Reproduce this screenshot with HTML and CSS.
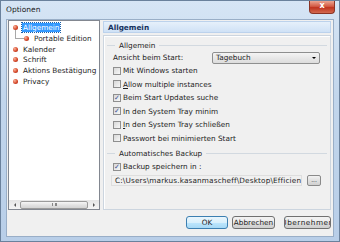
FILE: index.html
```html
<!DOCTYPE html>
<html lang="de">
<head>
    <meta charset="UTF-8">
    <title>Optionen</title>
    <link rel="stylesheet" href="styles.css">
</head>
<body>

    <div class="window">
        <div class="titlebar">
            <span class="title">Optionen</span>
            <span class="close">x</span>
        </div>

        <div class="client">
            <div class="main">

                <!-- tree of option pages -->
                <div class="tree">
                    <ul class="nodes">
                        <li class="node"><span class="ball"></span><span class="label selected">Allgemein</span></li>
                        <li class="node child"><span class="branch"></span><span class="ball"></span><span class="label">Portable Edition</span></li>
                        <li class="node"><span class="ball"></span><span class="label">Kalender</span></li>
                        <li class="node"><span class="ball"></span><span class="label">Schrift</span></li>
                        <li class="node"><span class="ball"></span><span class="label">Aktions Bestätigung</span></li>
                        <li class="node"><span class="ball"></span><span class="label">Privacy</span></li>
                    </ul>
                    <div class="hscroll">
                        <span class="arrow-btn"><span class="tri-left"></span></span>
                        <span class="thumb"><span class="grip"></span></span>
                        <span class="arrow-btn"><span class="tri-right"></span></span>
                    </div>
                </div>

                <!-- settings page -->
                <div class="pane">
                    <div class="pane-head">Allgemein</div>
                    <div class="pane-body">
                        <div class="legend">Allgemein</div>
                        <div class="row">
                            <span>Ansicht beim Start:</span>
                            <div class="combo">Tagebuch<span class="combo-arrow"></span></div>
                        </div>
                        <div class="check"><span class="box"></span>Mit Windows starten</div>
                        <div class="check"><span class="box"></span><u>A</u>llow multiple instances</div>
                        <div class="check"><span class="box on">&#10003;</span>Beim Start Updates suche</div>
                        <div class="check"><span class="box on">&#10003;</span>In den System Tray minim</div>
                        <div class="check"><span class="box"></span><u>I</u>n den System Tray schließen</div>
                        <div class="check"><span class="box"></span>Passwort bei minimierten Start</div>

                        <div class="legend second">Automatisches Backup</div>
                        <div class="check"><span class="box on">&#10003;</span>Backup speichern in :</div>
                        <div class="path-row">
                            <div class="path">C:\Users\markus.kasanmascheff\Desktop\Efficient</div>
                            <div class="browse">...</div>
                        </div>
                    </div>
                </div>
            </div>

            <div class="buttons">
                <div class="btn default">OK</div>
                <div class="btn">Abbrechen</div>
                <div class="btn apply"><span>Übernehmen</span></div>
            </div>
        </div>
    </div>

</body>
</html>
```

FILE: styles.css
```css
* {
    box-sizing: border-box;
}

body {
    margin: 0;
    font-family: "DejaVu Sans", sans-serif;
    font-size: 7.3px;
    color: #1e1e1e;
}

.window {
    width: 340px;
    height: 242px;
    border: 1px solid #6a819c;
    background: linear-gradient(#d6e5f5, #c2d6ec 40%, #b8cee8);
    display: flex;
    flex-direction: column;
}

.titlebar {
    height: 18px;
    flex: none;
    display: flex;
    align-items: flex-start;
    padding-left: 5px;
}

.title {
    margin-top: 4px;
    font-size: 7.5px;
    color: #1b1b1b;
}

.close {
    margin-left: auto;
    margin-right: 4px;
    width: 26px;
    height: 13px;
    background: linear-gradient(#eba592, #d35a44 45%, #c0341f 55%, #d2694f);
    border: 1px solid #8a3425;
    border-top: none;
    border-radius: 0 0 4px 4px;
    color: #fff;
    font-weight: bold;
    font-size: 8px;
    line-height: 10px;
    text-align: center;
}

.client {
    flex: 1;
    margin: 0 5px 4px;
    background: #f0f0f0;
    border: 1px solid #99aec7;
    display: flex;
    flex-direction: column;
    padding: 0 2px 0 1px;
}

.main {
    height: 190px;
    display: flex;
    gap: 3px;
}

/* tree */
.tree {
    width: 92px;
    border: 1px solid #828790;
    background: #fff;
    display: flex;
    flex-direction: column;
    overflow: hidden;
}

.nodes {
    list-style: none;
    margin: 0;
    padding: 1.5px 0 0;
    flex: 1;
}

.node {
    height: 10.7px;
    display: flex;
    align-items: center;
    padding-left: 4px;
    white-space: nowrap;
}

.node.child {
    padding-left: 6px;
}

.ball {
    width: 5px;
    height: 5px;
    flex: none;
    border-radius: 50%;
    background: radial-gradient(circle at 35% 35%, #f8b59c, #d8482a 55%, #8c2612);
    margin-right: 4px;
}

.branch {
    width: 9px;
    height: 9px;
    flex: none;
    align-self: flex-start;
    margin-top: -3px;
    border-left: 1px solid #a8a8a8;
    border-bottom: 1px solid #a8a8a8;
}

.label {
    padding: 0 1px;
    line-height: 9px;
}

.label.selected {
    background: #3399ff;
    color: #fff;
    outline: 1px dotted #1a5fa8;
}

.hscroll {
    height: 9px;
    flex: none;
    display: flex;
    align-items: center;
    background: linear-gradient(#e6e6e6, #f4f4f4);
    padding: 0 1px;
}

.arrow-btn {
    width: 9px;
    height: 9px;
    display: flex;
    align-items: center;
    justify-content: center;
}

.tri-left {
    border-top: 2px solid transparent;
    border-bottom: 2px solid transparent;
    border-right: 2px solid #555;
}

.tri-right {
    border-top: 2px solid transparent;
    border-bottom: 2px solid transparent;
    border-left: 2px solid #555;
}

.thumb {
    flex: 1;
    height: 8px;
    margin: 0 1px;
    border: 1px solid #9b9b9b;
    border-radius: 2px;
    background: linear-gradient(#f6f6f6, #e2e2e2 50%, #d4d4d4);
    display: flex;
    align-items: center;
    justify-content: center;
}

.grip {
    width: 5px;
    height: 3px;
    border-left: 1px solid #888;
    border-right: 1px solid #888;
    background: linear-gradient(90deg, transparent 2px, #888 2px, #888 3px, transparent 3px);
}

/* right page */
.pane {
    flex: 1;
    display: flex;
    flex-direction: column;
}

.pane-head {
    height: 12px;
    margin-top: 1px;
    flex: none;
    padding-left: 4px;
    line-height: 11px;
    font-weight: bold;
    color: #16325e;
    background: linear-gradient(#e6f0fb, #cfe1f6);
    border: 1px solid #bcd2ec;
}

.pane-body {
    flex: 1;
    margin-top: 2px;
    border: 1px solid #ccd5df;
    box-shadow: inset 1px 1px 0 #fff;
    padding: 3px 3px 0;
}

.legend {
    height: 12px;
    display: flex;
    align-items: center;
    white-space: nowrap;
}

.legend::before {
    content: "";
    width: 8px;
    height: 1px;
    margin-right: 4px;
    background: #d2d9e0;
}

.legend::after {
    content: "";
    flex: 1;
    height: 1px;
    margin-left: 4px;
    background: #d2d9e0;
}

.legend.second {
    margin-top: 1.5px;
    height: 13.5px;
}

.row {
    height: 13px;
    display: flex;
    align-items: center;
    padding-left: 6px;
}

.combo {
    margin-left: auto;
    margin-right: 7px;
    width: 108px;
    height: 12px;
    border: 1px solid #8e8f8f;
    border-radius: 2px;
    background: linear-gradient(#f4f4f4, #e8e8e8 50%, #dcdcdc);
    display: flex;
    align-items: center;
    padding: 0 3px;
}

.combo-arrow {
    margin-left: auto;
    border-left: 2px solid transparent;
    border-right: 2px solid transparent;
    border-top: 2px solid #000;
}

.check {
    height: 13.5px;
    display: flex;
    align-items: center;
    padding-left: 6px;
    white-space: nowrap;
}

.box {
    width: 8px;
    height: 8px;
    flex: none;
    margin-right: 2px;
    border: 1px solid #8f8f8f;
    background: linear-gradient(135deg, #d8d8d8, #f7f7f7);
    font-size: 7px;
    line-height: 6px;
    text-align: center;
    color: #3d5494;
    font-weight: bold;
}

.path-row {
    margin-top: 1px;
    display: flex;
    align-items: center;
    padding-left: 4px;
}

.path {
    width: 191px;
    height: 11px;
    border: 1px solid #dedede;
    padding-left: 3px;
    line-height: 9px;
    letter-spacing: 0.15px;
    white-space: nowrap;
    overflow: hidden;
}

.browse {
    margin-left: 5px;
    width: 14px;
    height: 11px;
    border: 1px solid #8a8a8a;
    border-radius: 2px;
    background: linear-gradient(#f2f2f2, #e0e0e0 50%, #d0d0d0);
    font-size: 6px;
    line-height: 8px;
    text-align: center;
}

/* dialog buttons */
.buttons {
    display: flex;
    justify-content: flex-end;
    padding-top: 6px;
}

.btn {
    height: 13px;
    width: 43px;
    margin-left: 4px;
    border: 1px solid #707070;
    border-radius: 3px;
    background: linear-gradient(#f2f2f2, #ebebeb 50%, #dddddd 50%, #cfcfcf);
    display: flex;
    align-items: center;
    justify-content: center;
    white-space: nowrap;
    overflow: hidden;
}

.btn.default {
    width: 42px;
    border-color: #3c7fb1;
    background: linear-gradient(#eaf6fd, #d9f0fc 50%, #bee6fd 50%, #a7d9f5);
}

.btn.apply {
    width: 47px;
    margin-left: 9px;
    letter-spacing: 0.5px;
}
```
